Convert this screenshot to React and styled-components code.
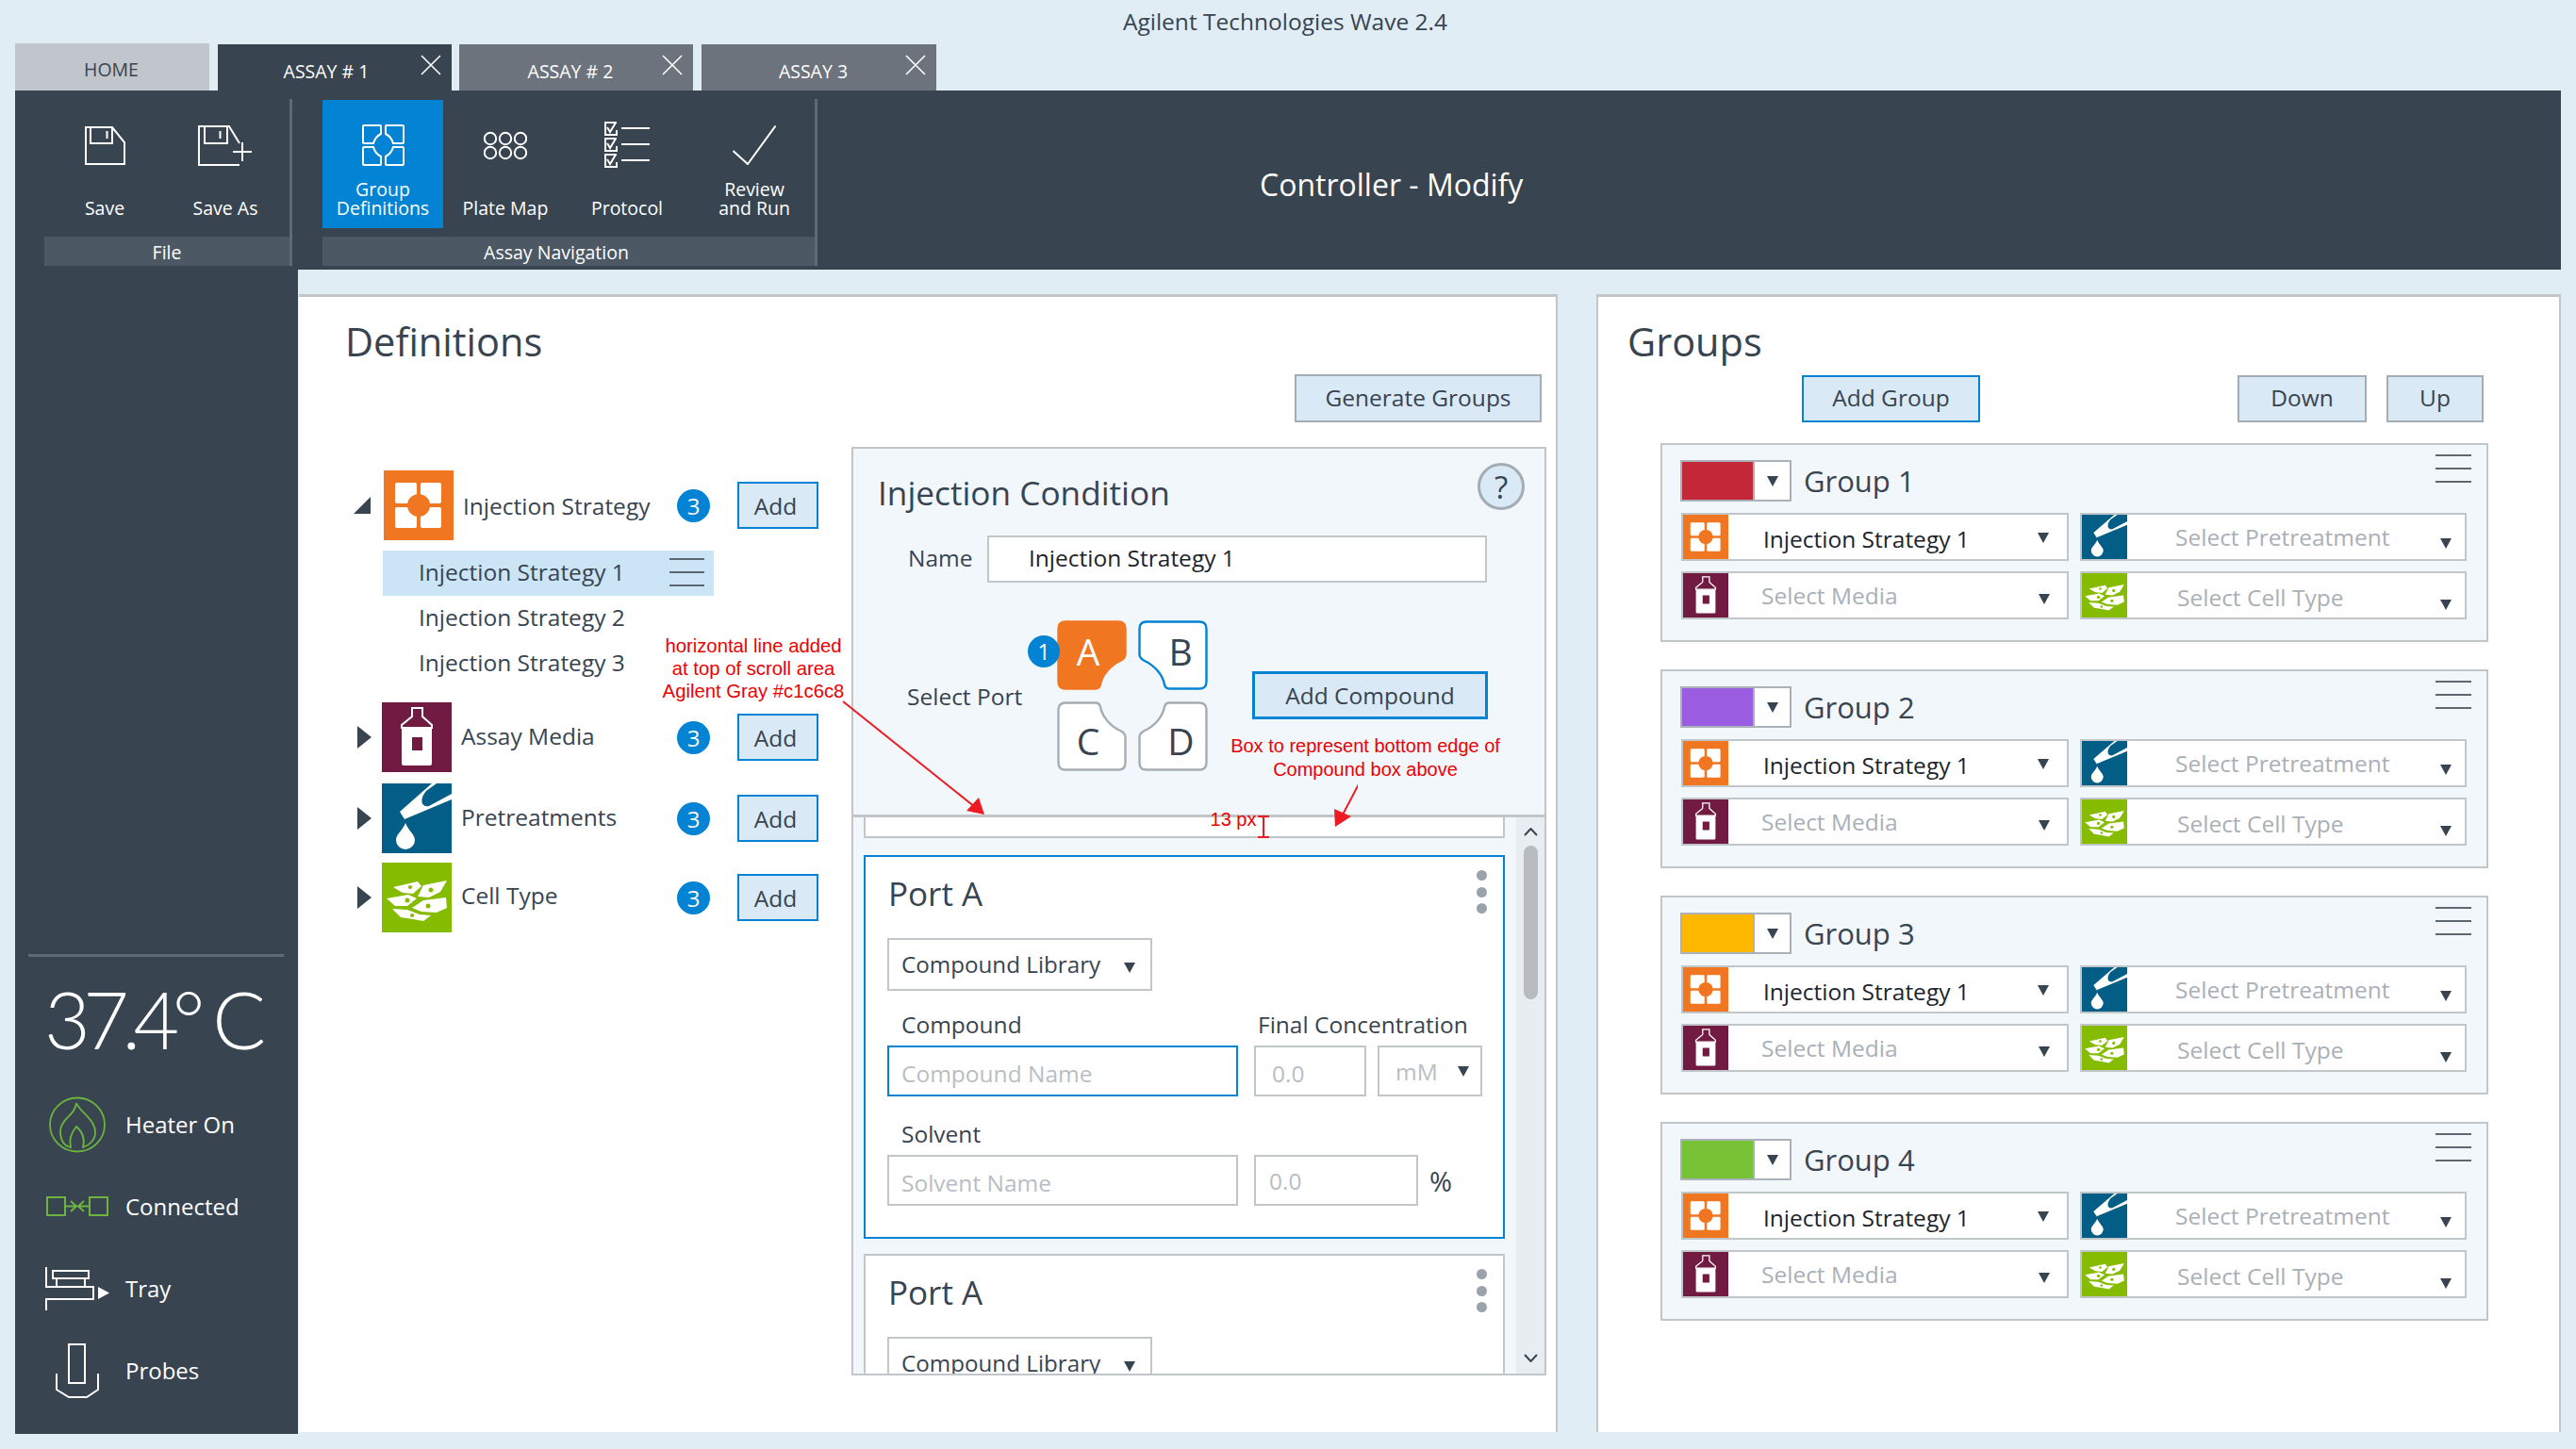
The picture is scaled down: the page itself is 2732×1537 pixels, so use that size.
import React from "react";
import styled, { createGlobalStyle } from "styled-components";

const DARK = "#384450";
const BLUE = "#0283d4";
const LINE = "#c1c6c8";
const TINT = "#d9e9f5";
const SOFT = "#f2f7fb";
const PAGE = "#e0edf5";
const RED = "#ed1c24";

const Global = createGlobalStyle`
  html, body { margin: 0; padding: 0; background: ${PAGE}; }
  * { box-sizing: border-box; }
  body { font-family: "Open Sans", "Noto Sans", sans-serif; color: ${DARK}; }
`;

const Page = styled.div`
  position: relative;
  width: 2732px;
  height: 1537px;
  overflow: hidden;
  display: flex;
  flex-direction: column;
`;
const AppTitle = styled.div`
  height: 46px;
  line-height: 46px;
  text-align: center;
  padding-right: 6px;
  font-size: 24.5px;
`;
const TabBar = styled.div`
  display: flex;
  align-items: flex-end;
  height: 50px;
  padding-left: 16px;
`;
const Tab = styled.div`
  position: relative;
  display: flex;
  align-items: center;
  justify-content: center;
  width: ${(p) => p.$w}px;
  height: ${(p) => (p.$home ? 50 : 49)}px;
  margin-left: ${(p) => p.$gap}px;
  padding: ${(p) => (p.$home ? "4px 2px 0 0" : `7px ${p.$shift}px 0 0`)};
  font-size: 19.5px;
  background: ${(p) => (p.$home ? "#c1c6cd" : p.$active ? DARK : "#6c737c")};
  color: ${(p) => (p.$home ? DARK : "#fff")};
`;
const TabClose = styled.svg`
  position: absolute;
  top: 11px;
  right: 11px;
  width: 22px;
  height: 22px;
`;
const Ribbon = styled.div`
  display: flex;
  height: 190px;
  margin: 0 16px;
  padding-top: 9px;
  background: ${DARK};
  color: #fff;
`;
const RibbonGroup = styled.div`
  display: flex;
  flex-direction: column;
  height: 177px;
  width: ${(p) => p.$w}px;
  margin-left: ${(p) => p.$left}px;
  border-right: 3px solid #5f6a75;
`;
const RibbonItems = styled.div`
  display: flex;
  height: 137px;
`;
const RibbonItem = styled.div`
  display: flex;
  flex-direction: column;
  align-items: center;
  justify-content: space-between;
  width: ${(p) => p.$w}px;
  height: 136px;
  margin-top: 1px;
  padding: 23px 0 11px ${(p) => p.$inset || 0}px;
  background: ${(p) => (p.$on ? BLUE : "transparent")};
`;
const RibbonIconBox = styled.div`
  display: flex;
  align-items: center;
  justify-content: center;
  height: 50px;
`;
const RibbonLabel = styled.div`
  font-size: 19.5px;
  line-height: 20px;
  text-align: center;
`;
const RibbonFoot = styled.div`
  height: 31px;
  margin-top: 9px;
  padding-right: ${(p) => p.$pad}px;
  line-height: 33px;
  text-align: center;
  font-size: 19.5px;
  background: #4d5865;
`;
const ScreenTitle = styled.div`
  margin: 0 0 0 469px;
  width: 279px;
  white-space: nowrap;
  text-align: center;
  line-height: 181px;
  font-size: 32px;
`;
const Body = styled.div`
  display: flex;
  height: 1235px;
  margin-left: 16px;
`;
const Sidebar = styled.aside`
  display: flex;
  flex-direction: column;
  justify-content: flex-end;
  width: 300px;
  padding-bottom: 24px;
  background: ${DARK};
  color: #fff;
`;
const SideRule = styled.div`
  height: 3px;
  margin: 0 15px 0 14px;
  background: #5f6a75;
`;
const Temperature = styled.div`
  height: 134px;
  padding-left: 31px;
  line-height: 132px;
  font-family: Lato, "Open Sans", sans-serif;
  font-weight: 300;
  font-size: 84px;
  letter-spacing: -7.5px;
  word-spacing: 0;
  white-space: nowrap;
`;
const StatusRow = styled.div`
  display: flex;
  align-items: center;
  gap: 17px;
  height: 87px;
  padding-left: 32px;
  font-size: 24px;
`;
const StatusIcon = styled.div`
  display: flex;
  justify-content: center;
  width: 68px;
`;
const Main = styled.main`
  display: flex;
  gap: 41px;
  padding: 26px 0 2px 1px;
`;
const DefinitionsPanel = styled.section`
  width: 1335px;
  padding: 22px 10px 0 49px;
  background: #fff;
  border-top: 3px solid ${LINE};
  border-right: 2px solid ${LINE};
`;
const PanelHeading = styled.h1`
  margin: 0;
  height: 50px;
  line-height: 50px;
  font-size: 41.5px;
  font-weight: 400;
`;
const GenerateRow = styled.div`
  display: flex;
  justify-content: flex-end;
  margin: 10px 5px 26px 0;
`;
const ActionButton = styled.button`
  height: ${(p) => p.$h || 50}px;
  width: ${(p) => p.$w}px;
  margin-left: ${(p) => p.$left || 0}px;
  padding: 0 ${(p) => p.$nudge || 0}px ${(p) => p.$up || 0}px 0;
  font: inherit;
  font-size: 24.5px;
  color: ${DARK};
  background: ${TINT};
  border: ${(p) => (p.$strong ? 3 : 2)}px solid ${(p) => (p.$blue ? BLUE : "#a5adb4")};
`;
const DefinitionColumns = styled.div`
  display: flex;
  gap: 35px;
  padding-left: 9px;
`;
const CategoryList = styled.div`
  width: 493px;
  padding-top: 25px;
`;
const CategoryRow = styled.div`
  display: flex;
  align-items: center;
  height: 74px;
  margin-top: ${(p) => p.$top || 0}px;
`;
const CaretBox = styled.div`
  display: flex;
  width: ${(p) => p.$w}px;
  padding-left: ${(p) => p.$pad}px;
`;
const CategoryName = styled.div`
  flex: 1;
  padding: 0 0 ${(p) => p.$up || 0}px 10px;
  font-size: 24.5px;
`;
const CountBadge = styled.div`
  display: flex;
  align-items: center;
  justify-content: center;
  width: ${(p) => p.$d || 35}px;
  height: ${(p) => p.$d || 35}px;
  border-radius: 50%;
  background: ${BLUE};
  color: #fff;
  font-size: ${(p) => p.$f || 24}px;
`;
const SubRow = styled.div`
  display: flex;
  align-items: center;
  justify-content: space-between;
  width: 351px;
  height: 48px;
  margin-left: 31px;
  padding: 0 10px 3px 38px;
  font-size: 24.5px;
  background: ${(p) => (p.$on ? "#cbe5f7" : "transparent")};
`;
const SubList = styled.div`
  margin-top: 11px;
`;
const ConditionPanel = styled.section`
  display: flex;
  flex-direction: column;
  width: 737px;
  height: 985px;
  background: ${SOFT};
  border: 2px solid ${LINE};
`;
const ConditionHead = styled.div`
  height: 388px;
`;
const ConditionTitleRow = styled.div`
  display: flex;
  justify-content: space-between;
  align-items: flex-start;
  height: 92px;
  padding: 15px 21px 0 26px;
`;
const ConditionTitle = styled.h2`
  margin: 0;
  line-height: 62px;
  font-size: 35.2px;
  font-weight: 400;
`;
const HelpCircle = styled.div`
  display: flex;
  align-items: center;
  justify-content: center;
  width: 50px;
  height: 50px;
  border-radius: 50%;
  border: 3px solid #a5adb4;
  background: ${TINT};
  font-size: 33px;
`;
const NameRow = styled.div`
  display: flex;
  align-items: center;
  padding-left: 58px;
  font-size: 24.5px;
`;
const NameLabel = styled.div`
  width: 84px;
  padding-bottom: 3px;
`;
const NameField = styled.div`
  display: flex;
  align-items: center;
  width: 530px;
  height: 50px;
  padding: 0 0 3px 42px;
  background: #fff;
  border: 2px solid ${LINE};
  color: #1c242c;
`;
const PortRow = styled.div`
  display: flex;
  align-items: center;
  margin-top: 40px;
  padding-left: 57px;
  font-size: 24.5px;
`;
const PortLabel = styled.div`
  width: 159px;
`;
const PortGrid = styled.div`
  display: grid;
  grid-template-columns: 74px 74px;
  grid-template-rows: 74px 74px;
  gap: 12px;
`;
const Port = styled.div`
  position: relative;
  display: flex;
  align-items: center;
  justify-content: center;
  padding: ${(p) => p.$pad};
  font-size: 39px;
  color: ${(p) => (p.$on ? "#fff" : DARK)};
`;
const PortShape = styled.svg`
  position: absolute;
  inset: 0;
  width: 74px;
  height: 74px;
  transform: scale(${(p) => (p.$fx ? -1 : 1)}, ${(p) => (p.$fy ? -1 : 1)});
`;
const PortLetter = styled.span`
  position: relative;
`;
const PortBadge = styled.div`
  position: absolute;
  left: -31px;
  top: 16px;
`;
const AddCompound = styled.div`
  align-self: flex-start;
  margin: 54px 0 0 47px;
`;
const ScrollArea = styled.div`
  display: flex;
  flex: 1;
  min-height: 0;
  border-top: 3px solid ${LINE};
`;
const ScrollContent = styled.div`
  width: 703px;
  padding-left: 11px;
  overflow: hidden;
`;
const StubBox = styled.div`
  width: 680px;
  height: 22px;
  background: #fff;
  border: 2px solid ${LINE};
  border-top: 0;
`;
const PortCard = styled.div`
  width: 680px;
  height: 407px;
  margin-top: ${(p) => p.$top}px;
  padding: 14px 17px 0 23px;
  background: #fff;
  border: 2px solid ${(p) => (p.$on ? BLUE : LINE)};
`;
const PortCardHead = styled.div`
  display: flex;
  justify-content: space-between;
  height: 50px;
`;
const PortTitle = styled.div`
  padding-left: 1px;
  line-height: 50px;
  font-size: 35px;
`;
const Kebab = styled.div`
  display: flex;
  flex-direction: column;
  gap: 6.5px;
`;
const KebabDot = styled.span`
  width: 11px;
  height: 11px;
  border-radius: 50%;
  background: #9aa3ab;
`;
const LibrarySelect = styled.div`
  display: flex;
  align-items: center;
  justify-content: space-between;
  width: 281px;
  height: 56px;
  margin-top: 22px;
  padding: 0 16px 2px 13px;
  font-size: 24.2px;
  border: 2px solid ${LINE};
`;
const Arrow = styled.span`
  display: block;
  width: 0;
  height: 0;
  margin-top: ${(p) => p.$drop || 0}px;
  border-left: 6px solid transparent;
  border-right: 6px solid transparent;
  border-top: 11px solid ${DARK};
`;
const FieldLabels = styled.div`
  display: flex;
  height: 31px;
  margin: ${(p) => p.$top}px 0 7px;
  line-height: 31px;
  font-size: 24.5px;
`;
const FieldLabel = styled.div`
  width: ${(p) => p.$w}px;
  padding-left: ${(p) => p.$pad}px;
  white-space: nowrap;
`;
const FieldRow = styled.div`
  display: flex;
  align-items: center;
  font-size: 24.5px;
`;
const FieldBox = styled.div`
  display: flex;
  align-items: center;
  justify-content: space-between;
  width: ${(p) => p.$w}px;
  height: 54px;
  margin-left: ${(p) => p.$left || 0}px;
  padding: ${(p) => p.$dy ?? 5}px ${(p) => p.$right || 0}px 0 ${(p) => p.$pad}px;
  color: #b8bec3;
  border: 2px solid ${(p) => (p.$on ? BLUE : LINE)};
`;
const Percent = styled.div`
  margin-left: 12px;
  font-size: 29px;
`;
const ScrollRail = styled.div`
  position: relative;
  width: 30px;
  background: #e8edf1;
`;
const RailArrow = styled.svg`
  position: absolute;
  left: 8px;
  width: 15px;
  height: 9px;
`;
const RailThumb = styled.div`
  position: absolute;
  left: 8px;
  top: 30px;
  width: 15px;
  height: 163px;
  border-radius: 8px;
  background: #b8bcbf;
`;
const GroupsPanel = styled.section`
  width: 1023px;
  padding: 22px 2px 0 31px;
  background: #fff;
  border-top: 3px solid ${LINE};
  border-left: 2px solid ${LINE};
  border-right: 2px solid ${LINE};
`;
const GroupActions = styled.div`
  display: flex;
  margin: 11px 0 22px 185px;
`;
const GroupCard = styled.div`
  width: 878px;
  height: 211px;
  margin: 0 0 29px 35px;
  padding: 16px 16px 0 19px;
  background: ${SOFT};
  border: 2px solid ${LINE};
`;
const GroupHead = styled.div`
  display: flex;
  align-items: center;
  height: 44px;
`;
const ColorPicker = styled.div`
  display: flex;
  width: 118px;
  height: 44px;
  background: #fff;
  border: 2px solid #aab1b8;
`;
const ColorSwatch = styled.div`
  width: 77px;
  background: ${(p) => p.$c};
  border-right: 2px solid #aab1b8;
`;
const ColorArrow = styled.div`
  display: flex;
  flex: 1;
  align-items: center;
  justify-content: center;
`;
const GroupName = styled.div`
  flex: 1;
  margin-left: 13px;
  font-size: 31px;
`;
const MenuLines = styled.div`
  display: flex;
  flex-direction: column;
  justify-content: space-between;
  align-self: ${(p) => (p.$top ? "flex-start" : "center")};
  margin-top: ${(p) => (p.$top ? -6 : 0)}px;
  width: ${(p) => p.$w}px;
  height: 30px;
`;
const MenuLine = styled.span`
  display: block;
  height: 2px;
  background: #5d6872;
`;
const GroupSelects = styled.div`
  display: grid;
  grid-template-columns: 411px 410px;
  grid-auto-rows: 51px;
  gap: 11px 12px;
  margin: 12px 0 0 1px;
`;
const GroupSelect = styled.div`
  display: flex;
  align-items: center;
  background: #fff;
  border: 2px solid ${LINE};
  font-size: 24.5px;
`;
const SelectIcon = styled.div`
  display: flex;
  flex: none;
  width: 48px;
  height: 47px;
`;
const SelectText = styled.div`
  flex: 1;
  padding: ${(p) => p.$dy || 0}px 0 0 ${(p) => p.$pad}px;
  color: ${(p) => (p.$empty ? "#a9b0b6" : "#1c242c")};
  white-space: nowrap;
`;
const SelectArrow = styled.div`
  flex: none;
  width: ${(p) => p.$w}px;
`;
const GlyphBox = styled.svg`
  display: block;
  width: ${(p) => p.$w}px;
  height: ${(p) => p.$h}px;
`;
const RedNote = styled.div`
  position: absolute;
  left: ${(p) => p.$x}px;
  top: ${(p) => p.$y}px;
  width: ${(p) => p.$w}px;
  text-align: center;
  font-family: "Liberation Sans", Arial, sans-serif;
  font-size: ${(p) => p.$f}px;
  line-height: ${(p) => p.$lh}px;
  color: #ee0000;
  white-space: nowrap;
`;
const Markup = styled.svg`
  position: absolute;
  left: 880px;
  top: 730px;
  width: 560px;
  height: 170px;
`;

const Stroke = { fill: "none", stroke: "#fff", strokeWidth: 2 };

function CloseGlyph() {
  return (
    <TabClose viewBox="0 0 22 22">
      <path d="M1 1 21 21M21 1 1 21" fill="none" stroke="#fff" strokeWidth="1.6" />
    </TabClose>
  );
}
function SaveGlyph() {
  return (
    <GlyphBox $w={43} $h={41} viewBox="0 0 43 41">
      <path d="M1 1H29L42 17V40H1Z" {...Stroke} />
      <path d="M6 1V18H29V1M23.5 5V13" {...Stroke} />
    </GlyphBox>
  );
}
function SaveAsGlyph() {
  return (
    <GlyphBox $w={58} $h={43} viewBox="0 0 58 43">
      <path d="M44 42H1V1H33L44 19" {...Stroke} />
      <path d="M7 1V19H31V1M23.5 6V14M37 28H57M47 18V38" {...Stroke} />
    </GlyphBox>
  );
}
function GroupDefsGlyph() {
  const q = "M1 2Q1 1 2 1H19Q20 1 20 2V10Q14 13 12 20H2Q1 20 1 19Z";
  return (
    <GlyphBox $w={45} $h={44} viewBox="0 0 45 44">
      <g {...Stroke}>
        <path d={q} />
        <path d={q} transform="matrix(-1 0 0 1 45 0)" />
        <path d={q} transform="matrix(1 0 0 -1 0 44)" />
        <path d={q} transform="matrix(-1 0 0 -1 45 44)" />
      </g>
    </GlyphBox>
  );
}
function PlateGlyph() {
  return (
    <GlyphBox $w={46} $h={31} viewBox="0 0 46 31">
      <g {...Stroke}>
        {[7, 23, 39].map((x) => [8, 23].map((y) => <circle key={`${x}${y}`} cx={x} cy={y} r="6.2" />))}
      </g>
    </GlyphBox>
  );
}
function ProtocolGlyph() {
  return (
    <GlyphBox $w={49} $h={50} viewBox="0 0 49 50">
      <g {...Stroke}>
        {[1, 18, 35].map((y) => (
          <g key={y}>
            <path d={`M13 ${y}H1V${y + 13}H13V${y + 8}`} />
            <path d={`M3 ${y + 5}L6 ${y + 10}L12 ${y}`} />
            <path d={`M18 ${y + 6}H48`} />
          </g>
        ))}
      </g>
    </GlyphBox>
  );
}
function CheckGlyph() {
  return (
    <GlyphBox $w={46} $h={42} viewBox="0 0 46 42">
      <path d="M0.5 27 16 41 45.5 0.5" {...Stroke} />
    </GlyphBox>
  );
}
function StrategyGlyph({ w, h }) {
  return (
    <GlyphBox $w={w} $h={h} viewBox="0 0 74 74" preserveAspectRatio="none">
      <rect width="74" height="74" fill="#f07622" />
      <g fill="#fff">
        <rect x="12" y="13" width="23" height="22" rx="2" />
        <rect x="39" y="13" width="22" height="22" rx="2" />
        <rect x="12" y="39" width="23" height="22" rx="2" />
        <rect x="39" y="39" width="22" height="22" rx="2" />
      </g>
      <circle cx="37" cy="37" r="12" fill="#f07622" />
    </GlyphBox>
  );
}
function MediaGlyph({ w, h }) {
  return (
    <GlyphBox $w={w} $h={h} viewBox="0 0 74 74" preserveAspectRatio="none">
      <rect width="74" height="74" fill="#711b42" />
      <path d="M32 6H43V15L53 24V27H21V24L32 15Z" fill="none" stroke="#fff" strokeWidth="2" />
      <path fillRule="evenodd" d="M21 27H53V65Q53 67 51 67H23Q21 67 21 65ZM32 37V51H43V37Z" fill="#fff" />
    </GlyphBox>
  );
}
function PretreatGlyph({ w, h }) {
  return (
    <GlyphBox $w={w} $h={h} viewBox="0 0 74 74" preserveAspectRatio="none">
      <rect width="74" height="74" fill="#025d87" />
      <path d="M53 0L19 30L24 38L74 17V11L50 24C41 26 40 16 47 8L58 0Z" fill="#fff" />
      <path d="M25 42C22 50 15 54 15 60A10 10 0 0 0 35 60C35 54 28 50 25 42Z" fill="#fff" />
    </GlyphBox>
  );
}
function CellGlyph({ w, h }) {
  return (
    <GlyphBox $w={w} $h={h} viewBox="0 0 74 74" preserveAspectRatio="none">
      <rect width="74" height="74" fill="#85bc00" />
      <g fill="#fff">
        <path d="M12 26L38 20L42 25L33 33L22 32Z" />
        <path d="M44 24L69 19L62 31L50 37L38 36Z" />
        <path d="M5 38L28 34L37 38L27 46L14 46Z" />
        <path d="M32 48L44 40L68 37L69 48L58 53L42 52Z" />
        <path d="M11 49L27 50L40 55L52 56L44 62L33 60L20 58Z" />
      </g>
      <g fill="#85bc00">
        <circle cx="30" cy="26" r="2" />
        <circle cx="52" cy="29" r="2.5" />
        <circle cx="27" cy="40" r="2.5" />
        <circle cx="49" cy="46" r="2.5" />
        <circle cx="32" cy="56" r="2" />
      </g>
    </GlyphBox>
  );
}
function FlameGlyph() {
  return (
    <GlyphBox $w={60} $h={60} viewBox="0 0 60 60">
      <g fill="none" stroke="#6cb33f" strokeWidth="1.8">
        <ellipse cx="30" cy="30" rx="29" ry="28.5" />
        <path d="M29 7C32 16 49 24 49 38C49 46 43 52 36 54C38 46 36 38 29 32C24 38 21 46 23 54C15 52 12 45 12 37C12 24 28 20 29 7Z" />
      </g>
    </GlyphBox>
  );
}
function LinkGlyph() {
  return (
    <GlyphBox $w={66} $h={21} viewBox="0 0 66 21">
      <path d="M1 1H20V20H1ZM46 1H65V20H46ZM20 10.5H31M26 5 32 10.5 26 16M46 10.5H35M40 5 34 10.5 40 16" fill="none" stroke="#6cb33f" strokeWidth="2" />
    </GlyphBox>
  );
}
function TrayGlyph() {
  return (
    <GlyphBox $w={68} $h={46} viewBox="0 0 68 46">
      <path d="M1 0V21H51V34H1V46M8 4H46V12H8ZM12 12V21M42 12V21" {...Stroke} />
      <path d="M56 21 68 27.5 56 34Z" fill="#fff" />
    </GlyphBox>
  );
}
function ProbeGlyph() {
  return (
    <GlyphBox $w={46} $h={58} viewBox="0 0 46 58">
      <path d="M14 1H31V42H14ZM1 32V49L14 57H33L45 49V32" {...Stroke} />
    </GlyphBox>
  );
}
function CaretOpen() {
  return (
    <GlyphBox $w={18} $h={18} viewBox="0 0 18 18">
      <path d="M0 18 18 0V18Z" fill={DARK} />
    </GlyphBox>
  );
}
function CaretClosed() {
  return (
    <GlyphBox $w={15} $h={24} viewBox="0 0 15 24">
      <path d="M0 0 15 12 0 24Z" fill={DARK} />
    </GlyphBox>
  );
}

function Menu({ w, top }) {
  return (
    <MenuLines $w={w} $top={top}>
      <MenuLine />
      <MenuLine />
      <MenuLine />
    </MenuLines>
  );
}
function PortButton({ letter, on, flipX, flipY, pad, children }) {
  return (
    <Port $on={on} $pad={pad}>
      <PortShape viewBox="0 0 74 74" $fx={flipX} $fy={flipY}>
        <path
          d="M9 1.5H65Q72.5 1.5 72.5 9V36Q72.5 40 68 42.5C56 48 48 58 46 68Q45 72.5 41 72.5H9Q1.5 72.5 1.5 65V9Q1.5 1.5 9 1.5Z"
          fill={on ? "#f07622" : "#fff"}
          stroke={on ? "#f07622" : flipX && !flipY ? BLUE : "#a5adb4"}
          strokeWidth="2.4"
        />
      </PortShape>
      <PortLetter>{letter}</PortLetter>
      {children}
    </Port>
  );
}
function CompoundCard({ on, top }) {
  return (
    <PortCard $on={on} $top={top}>
      <PortCardHead>
        <PortTitle>Port A</PortTitle>
        <Kebab>
          <KebabDot />
          <KebabDot />
          <KebabDot />
        </Kebab>
      </PortCardHead>
      <LibrarySelect>
        Compound Library
        <Arrow $drop={8} />
      </LibrarySelect>
      <FieldLabels $top={20}>
        <FieldLabel $w={393} $pad={15}>Compound</FieldLabel>
        <FieldLabel $w={230} $pad={0}>Final Concentration</FieldLabel>
      </FieldLabels>
      <FieldRow>
        <FieldBox $w={372} $pad={13} $on>Compound Name</FieldBox>
        <FieldBox $w={119} $left={17} $pad={17}>0.0</FieldBox>
        <FieldBox $w={111} $left={12} $pad={17} $right={12} $dy={0}>
          mM
          <Arrow />
        </FieldBox>
      </FieldRow>
      <FieldLabels $top={24}>
        <FieldLabel $w={393} $pad={15}>Solvent</FieldLabel>
      </FieldLabels>
      <FieldRow>
        <FieldBox $w={372} $pad={13}>Solvent Name</FieldBox>
        <FieldBox $w={174} $left={17} $pad={14} $dy={0}>0.0</FieldBox>
        <Percent>%</Percent>
      </FieldRow>
    </PortCard>
  );
}

const groups = [
  { name: "Group 1", color: "#c32838" },
  { name: "Group 2", color: "#9a5ce0" },
  { name: "Group 3", color: "#ffb800" },
  { name: "Group 4", color: "#77c234" },
];
const ribbonNav = [
  { w: 128, label: ["Group", "Definitions"], icon: <GroupDefsGlyph />, on: true },
  { w: 132, label: ["Plate Map"], icon: <PlateGlyph /> },
  { w: 126, label: ["Protocol"], icon: <ProtocolGlyph /> },
  { w: 136, inset: 8, label: ["Review", "and Run"], icon: <CheckGlyph /> },
];

function Ribbonish({ item }) {
  return (
    <RibbonItem $w={item.w} $on={item.on} $inset={item.inset}>
      <RibbonIconBox>{item.icon}</RibbonIconBox>
      <RibbonLabel>
        {item.label.map((l) => (
          <div key={l}>{l}</div>
        ))}
      </RibbonLabel>
    </RibbonItem>
  );
}

export default function App() {
  return (
    <Page>
      <Global />
      <AppTitle>Agilent Technologies Wave 2.4</AppTitle>
      <TabBar>
        <Tab $home $w={206} $gap={0}>HOME</Tab>
        <Tab $active $w={248} $gap={9} $shift={18}>ASSAY # 1<CloseGlyph /></Tab>
        <Tab $w={248} $gap={8} $shift={12}>ASSAY # 2<CloseGlyph /></Tab>
        <Tab $w={249} $gap={9} $shift={12}>ASSAY 3<CloseGlyph /></Tab>
      </TabBar>
      <Ribbon>
        <RibbonGroup $w={263} $left={31}>
          <RibbonItems>
            <Ribbonish item={{ w: 128, label: ["Save"], icon: <SaveGlyph /> }} />
            <Ribbonish item={{ w: 128, label: ["Save As"], icon: <SaveAsGlyph /> }} />
          </RibbonItems>
          <RibbonFoot $pad={0}>File</RibbonFoot>
        </RibbonGroup>
        <RibbonGroup $w={525} $left={32}>
          <RibbonItems>
            {ribbonNav.map((it) => (
              <Ribbonish key={it.label[0]} item={it} />
            ))}
          </RibbonItems>
          <RibbonFoot $pad={26}>Assay Navigation</RibbonFoot>
        </RibbonGroup>
        <ScreenTitle>Controller - Modify</ScreenTitle>
      </Ribbon>
      <Body>
        <Sidebar>
          <SideRule />
          <Temperature>37.4° C</Temperature>
          <StatusRow>
            <StatusIcon><FlameGlyph /></StatusIcon>
            Heater On
          </StatusRow>
          <StatusRow>
            <StatusIcon><LinkGlyph /></StatusIcon>
            Connected
          </StatusRow>
          <StatusRow>
            <StatusIcon><TrayGlyph /></StatusIcon>
            Tray
          </StatusRow>
          <StatusRow>
            <StatusIcon><ProbeGlyph /></StatusIcon>
            Probes
          </StatusRow>
        </Sidebar>
        <Main>
          <DefinitionsPanel>
            <PanelHeading>Definitions</PanelHeading>
            <GenerateRow>
              <ActionButton $w={262} $h={51} $up={3}>Generate Groups</ActionButton>
            </GenerateRow>
            <DefinitionColumns>
              <CategoryList>
                <CategoryRow>
                  <CaretBox $w={32} $pad={0}><CaretOpen /></CaretBox>
                  <StrategyGlyph w={74} h={74} />
                  <CategoryName>Injection Strategy</CategoryName>
                  <CountBadge>3</CountBadge>
                  <ActionButton $w={86} $left={29} $blue $nudge={5}>Add</ActionButton>
                </CategoryRow>
                <SubList>
                  <SubRow $on>Injection Strategy 1<Menu w={37} /></SubRow>
                  <SubRow>Injection Strategy 2</SubRow>
                  <SubRow>Injection Strategy 3</SubRow>
                </SubList>
                <CategoryRow $top={17}>
                  <CaretBox $w={30} $pad={4}><CaretClosed /></CaretBox>
                  <MediaGlyph w={74} h={74} />
                  <CategoryName $up={3}>Assay Media</CategoryName>
                  <CountBadge>3</CountBadge>
                  <ActionButton $w={86} $left={29} $blue $nudge={5}>Add</ActionButton>
                </CategoryRow>
                <CategoryRow $top={12}>
                  <CaretBox $w={30} $pad={4}><CaretClosed /></CaretBox>
                  <PretreatGlyph w={74} h={74} />
                  <CategoryName $up={3}>Pretreatments</CategoryName>
                  <CountBadge>3</CountBadge>
                  <ActionButton $w={86} $left={29} $blue $nudge={5}>Add</ActionButton>
                </CategoryRow>
                <CategoryRow $top={10}>
                  <CaretBox $w={30} $pad={4}><CaretClosed /></CaretBox>
                  <CellGlyph w={74} h={74} />
                  <CategoryName $up={5}>Cell Type</CategoryName>
                  <CountBadge>3</CountBadge>
                  <ActionButton $w={86} $left={29} $blue $nudge={5}>Add</ActionButton>
                </CategoryRow>
              </CategoryList>
              <ConditionPanel>
                <ConditionHead>
                  <ConditionTitleRow>
                    <ConditionTitle>Injection Condition</ConditionTitle>
                    <HelpCircle>?</HelpCircle>
                  </ConditionTitleRow>
                  <NameRow>
                    <NameLabel>Name</NameLabel>
                    <NameField>Injection Strategy 1</NameField>
                  </NameRow>
                  <PortRow>
                    <PortLabel>Select Port</PortLabel>
                    <PortGrid>
                      <PortButton letter="A" on pad="0 8px 10px 0">
                        <PortBadge><CountBadge $d={34} $f={23}>1</CountBadge></PortBadge>
                      </PortButton>
                      <PortButton letter="B" flipX pad="0 0 10px 16px" />
                      <PortButton letter="C" flipY pad="8px 8px 0 0" />
                      <PortButton letter="D" flipX flipY pad="8px 0 0 17px" />
                    </PortGrid>
                    <AddCompound>
                      <ActionButton $w={250} $h={51} $blue $strong>Add Compound</ActionButton>
                    </AddCompound>
                  </PortRow>
                </ConditionHead>
                <ScrollArea>
                  <ScrollContent>
                    <StubBox />
                    <CompoundCard on top={18} />
                    <CompoundCard top={16} />
                  </ScrollContent>
                  <ScrollRail>
                    <RailArrow style={{ top: 11 }} viewBox="0 0 15 9">
                      <path d="M1 8 7.5 1 14 8" fill="none" stroke={DARK} strokeWidth="2" />
                    </RailArrow>
                    <RailThumb />
                    <RailArrow style={{ bottom: 12 }} viewBox="0 0 15 9">
                      <path d="M1 1 7.5 8 14 1" fill="none" stroke={DARK} strokeWidth="2" />
                    </RailArrow>
                  </ScrollRail>
                </ScrollArea>
              </ConditionPanel>
            </DefinitionColumns>
          </DefinitionsPanel>
          <GroupsPanel>
            <PanelHeading>Groups</PanelHeading>
            <GroupActions>
              <ActionButton $w={189} $blue $up={4}>Add Group</ActionButton>
              <ActionButton $w={137} $left={273} $up={4}>Down</ActionButton>
              <ActionButton $w={103} $left={21} $up={4}>Up</ActionButton>
            </GroupActions>
            {groups.map((g) => (
              <GroupCard key={g.name}>
                <GroupHead>
                  <ColorPicker>
                    <ColorSwatch $c={g.color} />
                    <ColorArrow><Arrow /></ColorArrow>
                  </ColorPicker>
                  <GroupName>{g.name}</GroupName>
                  <Menu w={38} top />
                </GroupHead>
                <GroupSelects>
                  <GroupSelect>
                    <SelectIcon><StrategyGlyph w={48} h={47} /></SelectIcon>
                    <SelectText $pad={37} $dy={3}>Injection Strategy 1</SelectText>
                    <SelectArrow $w={31}><Arrow $drop={1} /></SelectArrow>
                  </GroupSelect>
                  <GroupSelect>
                    <SelectIcon><PretreatGlyph w={48} h={47} /></SelectIcon>
                    <SelectText $pad={51} $empty>Select Pretreatment</SelectText>
                    <SelectArrow $w={26}><Arrow $drop={13} /></SelectArrow>
                  </GroupSelect>
                  <GroupSelect>
                    <SelectIcon><MediaGlyph w={48} h={47} /></SelectIcon>
                    <SelectText $pad={35} $empty>Select Media</SelectText>
                    <SelectArrow $w={30}><Arrow $drop={7} /></SelectArrow>
                  </GroupSelect>
                  <GroupSelect>
                    <SelectIcon><CellGlyph w={48} h={47} /></SelectIcon>
                    <SelectText $pad={53} $dy={3} $empty>Select Cell Type</SelectText>
                    <SelectArrow $w={26}><Arrow $drop={19} /></SelectArrow>
                  </GroupSelect>
                </GroupSelects>
              </GroupCard>
            ))}
          </GroupsPanel>
        </Main>
      </Body>

      <RedNote $x={679} $y={673} $w={240} $lh={24} $f={20.3}>
        horizontal line added
        <br />
        at top of scroll area
        <br />
        Agilent Gray #c1c6c8
      </RedNote>
      <RedNote $x={1288} $y={779} $w={320} $lh={25} $f={20}>
        Box to represent bottom edge of
        <br />
        Compound box above
      </RedNote>
      <RedNote $x={1270} $y={857} $w={76} $lh={24} $f={20}>13 px</RedNote>
      <Markup viewBox="880 730 560 170">
        <path d="M894 744 1034 856M1443 828 1422 868M1334 866H1346M1340 866V888M1334 888H1346" fill="none" stroke={RED} strokeWidth="2" />
        <path d="M1044 864 1025 860 1038 846Z" fill={RED} />
        <path d="M1416 877 1415 858 1433 866Z" fill={RED} />
      </Markup>
    </Page>
  );
}
